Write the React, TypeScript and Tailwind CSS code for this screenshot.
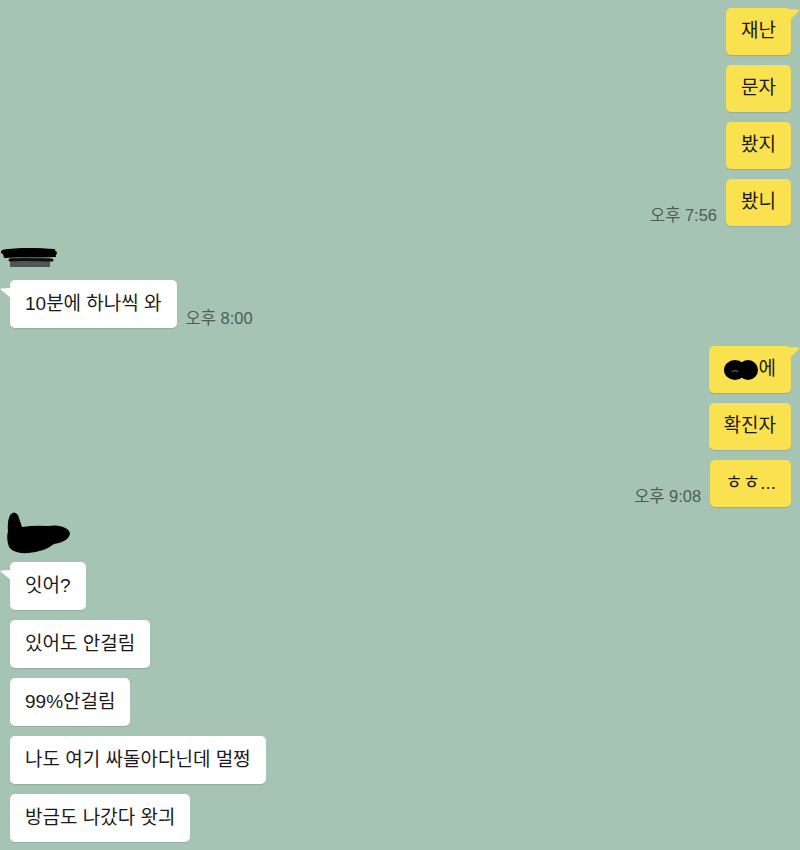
const font = "font-['Liberation_Sans','Noto_Sans_CJK_KR',sans-serif]";

function TailRight() {
  return (
    <svg className="absolute top-[1px] right-[-9px]" width="10" height="12" viewBox="0 0 10 12">
      <path d="M0 0 L9 0.5 Q10 1 9 2 L0 11 Z" fill="#fae150" />
    </svg>
  );
}

function TailLeft() {
  return (
    <svg className="absolute top-[8px] left-[-10px]" width="11" height="11" viewBox="0 0 11 11">
      <path d="M11 0 L1 0.5 Q0 1 1 2 L11 10 Z" fill="#ffffff" />
    </svg>
  );
}

function Mine({ children, tail, time }: { children: React.ReactNode; tail?: boolean; time?: string }) {
  return (
    <div className="flex justify-end items-end gap-[9px] pr-[9px]">
      {time && <span className="text-[16.5px] leading-[20px] pb-[1px] text-[#4d5d55]">{time}</span>}
      <div className="relative h-[47px] px-[15px] flex items-center rounded-[5px] bg-[#fae150] text-[19px] text-[#1b1b1b] shadow-[0_1px_1px_rgba(0,0,0,0.12)]">
        {tail && <TailRight />}
        {children}
      </div>
    </div>
  );
}

function Theirs({ children, tail, time }: { children: React.ReactNode; tail?: boolean; time?: string }) {
  return (
    <div className="flex items-end gap-[9px] pl-[10px]">
      <div className="relative h-[48px] px-[15px] flex items-center rounded-[5px] bg-white text-[19px] text-[#1b1b1b] shadow-[0_1px_1px_rgba(0,0,0,0.12)]">
        {tail && <TailLeft />}
        {children}
      </div>
      {time && <span className="text-[16.5px] leading-[20px] text-[#4d5d55]">{time}</span>}
    </div>
  );
}

export default function App() {
  return (
    <div className={`w-[800px] h-[850px] overflow-hidden bg-[#a6c4b4] ${font}`}>
      <div className="flex flex-col gap-[10px] pt-[8px]">
        <Mine tail>재난</Mine>
        <Mine>문자</Mine>
        <Mine>봤지</Mine>
        <Mine time="오후 7:56">봤니</Mine>
      </div>

      {/* first sender, name scribbled out */}
      <div className="mt-[19px] h-[24px] mb-[11px]">
        <svg width="60" height="24" viewBox="0 0 60 24">
          <path d="M10 13 h40 v9 h-40 Z" fill="#2e3430" opacity="0.75" />
          <path d="M2 5 C18 2 40 3 55 4 L56 12 C40 13 20 12 4 13 Z" fill="#000" />
          <path d="M3 7 C20 5 40 6 55 8" stroke="#000" strokeWidth="4" strokeLinecap="round" fill="none" />
          <path d="M10 15 C24 14 38 15 52 15" stroke="#111" strokeWidth="3" strokeLinecap="round" fill="none" />
        </svg>
      </div>
      <Theirs tail time="오후 8:00">10분에 하나씩 와</Theirs>

      <div className="flex flex-col gap-[10px] mt-[18px]">
        <Mine tail>
          <span className="inline-flex items-center">
            <svg width="35" height="24" viewBox="0 0 35 24">
              <ellipse cx="11" cy="12" rx="11" ry="10" fill="#000" />
              <ellipse cx="24" cy="12" rx="10" ry="10" fill="#000" />
              <path d="M8 14 q3 -3 6 0" stroke="#555" strokeWidth="1.5" fill="none" />
            </svg>
            에
          </span>
        </Mine>
        <Mine>확진자</Mine>
        <Mine time="오후 9:08">ㅎㅎ...</Mine>
      </div>

      {/* second sender, name scribbled out */}
      <div className="h-[44px] mt-[4px] mb-[7px] pl-[4px]">
        <svg width="70" height="44" viewBox="0 0 70 44">
          <path
            d="M6 4 Q10 -1 14 4 Q16 10 18 16 Q30 14 44 15 Q56 13 63 18 Q69 22 63 28 Q58 32 50 33 Q40 41 24 42 Q10 43 5 36 Q2 28 4 20 Q3 10 6 4 Z"
            fill="#000"
          />
        </svg>
      </div>
      <div className="flex flex-col gap-[10px]">
        <Theirs tail>잇어?</Theirs>
        <Theirs>있어도 안걸림</Theirs>
        <Theirs>99%안걸림</Theirs>
        <Theirs>나도 여기 싸돌아다닌데 멀쩡</Theirs>
        <Theirs>방금도 나갔다 왓긔</Theirs>
      </div>
    </div>
  );
}
